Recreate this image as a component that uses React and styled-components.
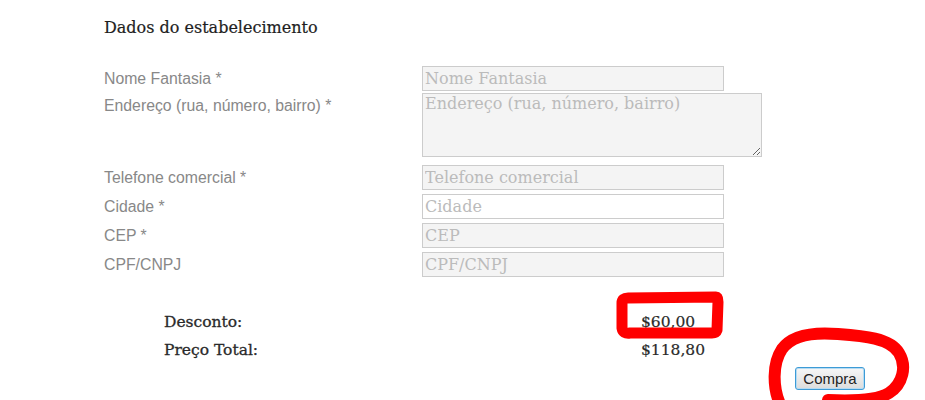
import React from "react";
import styled, { createGlobalStyle } from "styled-components";

const GlobalStyle = createGlobalStyle`
  html, body {
    margin: 0;
    padding: 0;
    background: #fff;
  }
  body {
    font-family: "Liberation Sans", Arial, sans-serif;
  }
`;

const Page = styled.div`
  position: relative;
  width: 925px;
  height: 400px;
  overflow: hidden;
  background: #fff;
  padding: 18px 0 0 104px;
  box-sizing: border-box;
`;

const Heading = styled.h3`
  margin: 0 0 28px;
  font-family: "DejaVu Serif", "Liberation Serif", serif;
  font-size: 16px;
  line-height: 20px;
  font-weight: normal;
  color: #1e1e1e;
  -webkit-text-stroke: 0.2px #1e1e1e;
`;

const Form = styled.div`
  display: flex;
  flex-direction: column;
`;

const Row = styled.div`
  display: grid;
  grid-template-columns: 318px auto;
  align-items: start;
  margin-bottom: ${(p) => p.$gap || 4}px;
`;

const Label = styled.label`
  font-size: 15.8px;
  line-height: 25px;
  color: #888;
`;

const fieldBase = `
  box-sizing: border-box;
  border: 1px solid #ccc;
  font-family: "DejaVu Serif", "Liberation Serif", serif;
  font-size: 16px;
  color: #555;
  padding: 0 2px;
  outline: none;
  &::placeholder {
    color: #bbb;
  }
`;

const Input = styled.input`
  ${fieldBase}
  width: 302px;
  height: 25px;
  background: ${(p) => (p.$white ? "#fff" : "#f4f4f4")};
`;

const TextArea = styled.textarea`
  ${fieldBase}
  width: 340px;
  height: 64px;
  background: #f4f4f4;
  display: block;
  resize: both;
`;

const Totals = styled.div`
  display: grid;
  grid-template-columns: 477px auto;
  margin: 31px 0 0 60px;
  row-gap: 8px;
  font-family: "DejaVu Serif", "Liberation Serif", serif;
  font-size: 15.5px;
  line-height: 20px;
  color: #2a2a2a;
`;

const TotalLabel = styled.span`
  -webkit-text-stroke: 0.3px #2a2a2a;
`;

const Value = styled.span`
  -webkit-text-stroke: 0.2px #2a2a2a;
`;

const Actions = styled.div`
  display: flex;
  margin: 7px 0 0 691px;
`;

const BuyButton = styled.button`
  width: 70px;
  height: 23px;
  padding: 0;
  font-family: "Liberation Sans", Arial, sans-serif;
  font-size: 15px;
  color: #222;
  border: 1px solid #3d9bd6;
  border-radius: 3px;
  background: linear-gradient(#f7f7f7, #dcdcdc);
  box-shadow: inset 0 0 0 1px #b5dbf3;
  cursor: pointer;
`;

const Marks = styled.svg`
  position: absolute;
  left: 0;
  top: 0;
  pointer-events: none;
`;

const fields = [
  { label: "Nome Fantasia *", ph: "Nome Fantasia", gap: 2 },
  { label: "Endereço (rua, número, bairro) *", ph: "Endereço (rua, número, bairro)", area: true, gap: 8 },
  { label: "Telefone comercial *", ph: "Telefone comercial" },
  { label: "Cidade *", ph: "Cidade", white: true },
  { label: "CEP *", ph: "CEP" },
  { label: "CPF/CNPJ", ph: "CPF/CNPJ" },
];

const App = () => {
  return (
    <Page>
      <GlobalStyle />
      <Heading>Dados do estabelecimento</Heading>
      <Form>
        {fields.map((f) => (
          <Row key={f.label} $gap={f.gap}>
            <Label>{f.label}</Label>
            {f.area ? (
              <TextArea placeholder={f.ph} />
            ) : (
              <Input placeholder={f.ph} $white={f.white} />
            )}
          </Row>
        ))}
      </Form>
      <Totals>
        <TotalLabel>Desconto:</TotalLabel>
        <Value>$60,00</Value>
        <TotalLabel>Preço Total:</TotalLabel>
        <Value>$118,80</Value>
      </Totals>
      <Actions>
        <BuyButton>Compra</BuyButton>
      </Actions>
      <Marks width="925" height="400" viewBox="0 0 925 400">
        <path
          d="M628 298 L716 297 Q718 297 718 302 L717 330 Q716 333 712 333 L630 333 Q623 334 622 328 L622 303 Q622 298 628 298 Z"
          fill="none"
          stroke="#f00"
          strokeWidth="11"
          strokeLinejoin="round"
        />
        <path
          d="M780 404 C773 388 772 364 782 349 C792 335 815 332 838 334 C864 336 890 338 899 353 C907 366 903 384 889 393 C876 401 850 401 828 400"
          fill="none"
          stroke="#f00"
          strokeWidth="12"
          strokeLinecap="round"
        />
      </Marks>
    </Page>
  );
};

export default App;
